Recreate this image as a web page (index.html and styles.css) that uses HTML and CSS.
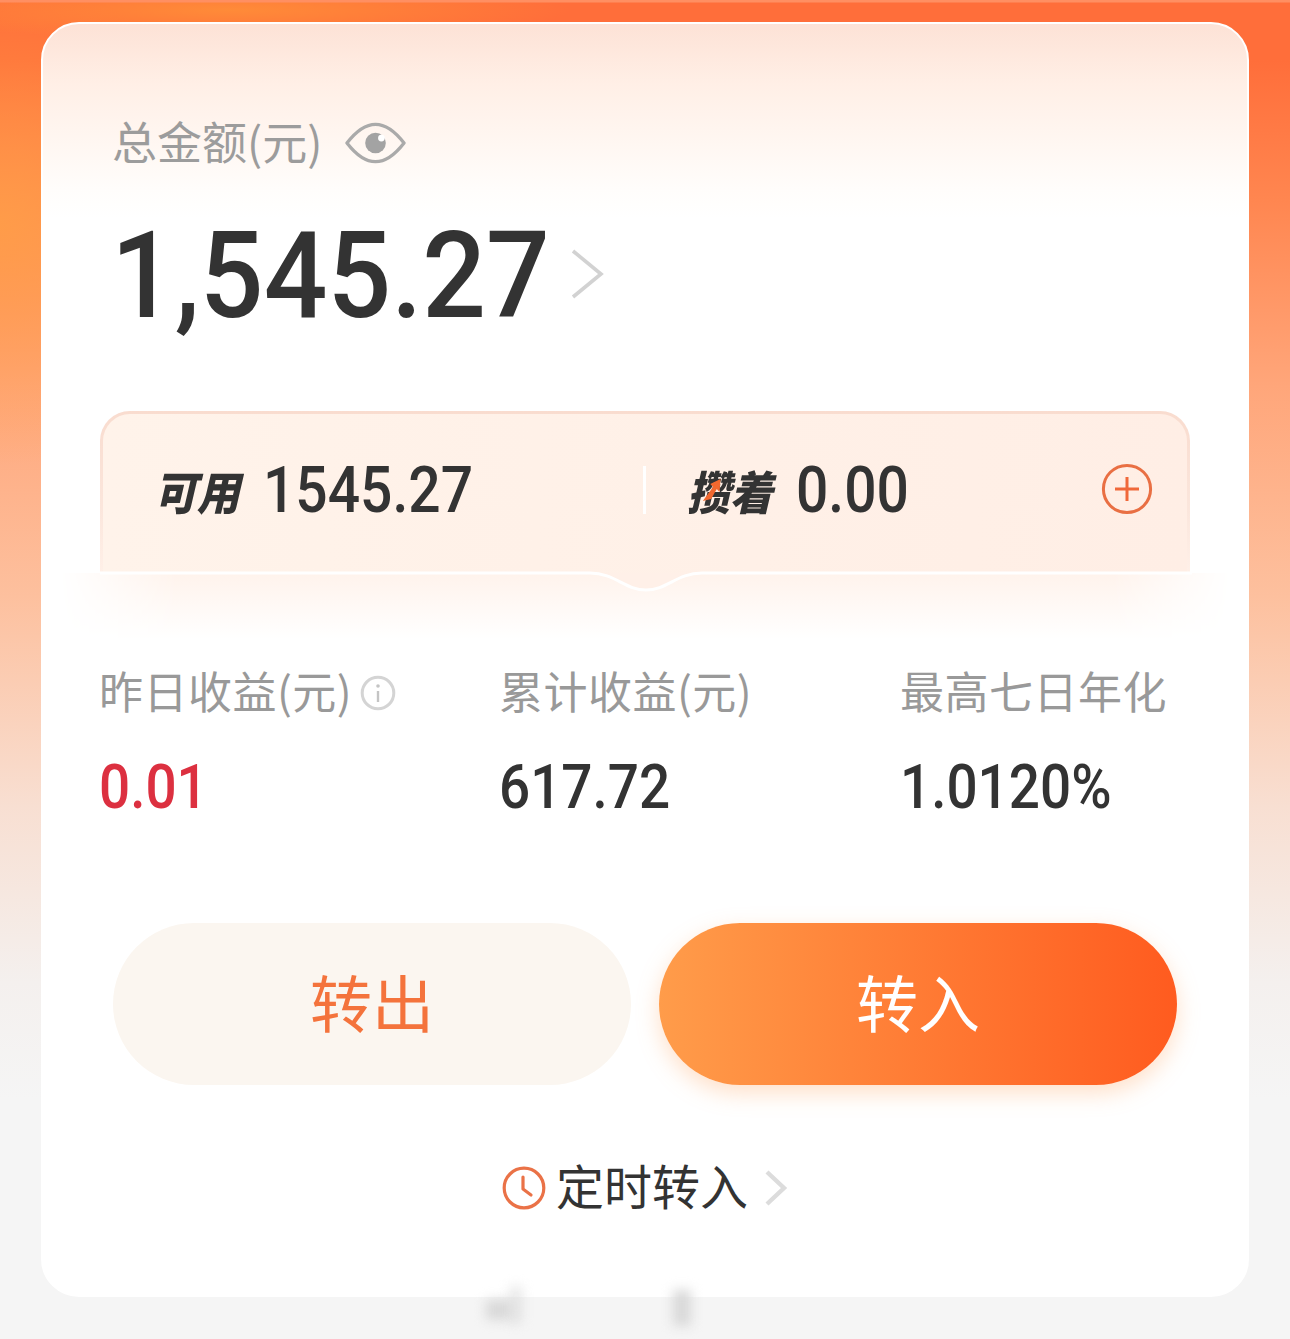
FILE: index.html
```html
<!DOCTYPE html>
<html lang="zh-CN">
<head>
    <meta charset="UTF-8">
    <meta name="viewport" content="width=device-width, initial-scale=1.0">
    <title>总金额</title>
    <link rel="stylesheet" href="styles.css">
</head>
<body>
    <div class="card">
        <div class="total-label">
            <span>总金额(元)</span>
            <svg class="eye-icon" viewBox="0 0 62 44" fill="none">
                <path d="M2 22C12 9 21 3 31 3s19 6 29 19C50 35 41 41 31 41S12 35 2 22z" stroke="#aaa" stroke-width="3.4" stroke-linejoin="round"/>
                <circle cx="31" cy="22" r="10.5" fill="#a3a3a3"/>
                <circle cx="37" cy="17" r="3.4" fill="#fff"/>
            </svg>
        </div>

        <div class="total-amount">
            <span class="amount-num">1,545.27</span>
            <svg class="big-chevron" viewBox="0 0 34 50" fill="none">
                <path d="M3 2l28 23L3 48" stroke="#d2d2d2" stroke-width="3.6"/>
            </svg>
        </div>

        <!-- 可用 / 攒着 -->
        <div class="balance-panel">
            <div class="balance-col">
                <span class="balance-tag">可用</span>
                <span class="balance-num">1545.27</span>
            </div>
            <div class="balance-line"></div>
            <div class="balance-col saved">
                <span class="balance-tag">攒着<svg class="tag-arrow" viewBox="0 0 22 26"><path d="M2 24L13 10l-3-3 11-5-1 13-3-3-6 10z" fill="#f2682f"/></svg></span>
                <span class="balance-num">0.00</span>
            </div>
            <svg class="plus-icon" viewBox="0 0 52 52" fill="none">
                <circle cx="26" cy="26" r="23.6" stroke="#e96f43" stroke-width="3"/>
                <path d="M26 14v24M14 26h24" stroke="#f0683a" stroke-width="3"/>
            </svg>
            <svg class="panel-notch" viewBox="0 0 1092 22" fill="none">
                <path d="M490 2C515 2 525 19 546 19S577 2 602 2z" fill="#fff0e8"/>
                <path d="M0 2H490C515 2 525 19 546 19S577 2 602 2H1092" stroke="#fff" stroke-width="3"/>
            </svg>
        </div>
        <div class="panel-glow"></div>

        <div class="stats">
            <div class="stat">
                <div class="stat-label">昨日收益(元)<svg class="info-icon" viewBox="0 0 36 36" fill="none">
                    <circle cx="18" cy="18" r="15.8" stroke="#d4d4d4" stroke-width="3"/>
                    <circle cx="18" cy="11" r="1.8" fill="#c4c4c4"/>
                    <path d="M18 16v11" stroke="#c4c4c4" stroke-width="2.4"/>
                </svg></div>
                <div class="stat-value red">0.01</div>
            </div>
            <div class="stat">
                <div class="stat-label">累计收益(元)</div>
                <div class="stat-value">617.72</div>
            </div>
            <div class="stat">
                <div class="stat-label">最高七日年化</div>
                <div class="stat-value">1.0120%</div>
            </div>
        </div>

        <div class="actions">
            <button class="action-btn out">转出</button>
            <button class="action-btn in">转入</button>
        </div>

        <div class="schedule">
            <svg class="clock-icon" viewBox="0 0 44 44" fill="none">
                <circle cx="22" cy="22" r="19.8" stroke="#ea7247" stroke-width="3.2"/>
                <path d="M21 11v12l8 6" stroke="#ea7247" stroke-width="3.2" stroke-linecap="round" stroke-linejoin="round"/>
            </svg>
            <span>定时转入</span>
            <svg class="small-chevron" viewBox="0 0 24 36" fill="none">
                <path d="M3 2l17 16L3 34" stroke="#dcdcdc" stroke-width="4.4"/>
            </svg>
        </div>
    </div>

    <!-- 底部水印的模糊痕迹 -->
    <div class="smudge smudge-a"></div>
    <div class="smudge smudge-b"></div>
    <div class="smudge smudge-c"></div>
</body>
</html>
```

FILE: styles.css
```css
body {
    position: relative;
    margin: 0;
    height: 1339px;
    padding: 22px 41px 0;
    box-sizing: border-box;
    overflow: hidden;
    font-family: "Noto Sans CJK SC", "Liberation Sans", sans-serif;
    background:
        linear-gradient(180deg, #ff8f62 0, #ff8f62 2px, rgba(255, 143, 98, 0) 3px),
        radial-gradient(ellipse 340px 30px at 230px 10px, rgba(255, 146, 56, 0.8), rgba(255, 146, 56, 0)),
        radial-gradient(ellipse 260px 240px at 0 225px, rgba(255, 160, 70, 0.8), rgba(255, 160, 70, 0)),
        linear-gradient(180deg, #ff6e3a 0, #ff6e3a 60px, #ff8650 200px, #ffa67a 386px, #fdc09e 596px, #f8dfd2 807px, #f4f0ee 982px, #f5f5f5 1100px);
}
.card {
    position: relative;
    box-sizing: border-box;
    width: 1208px;
    height: 1275px;
    border: 2px solid #fff;
    border-radius: 38px;
    padding: 0 57px;
    background: linear-gradient(180deg, #fde2d6 0, #ffefe6 60px, #fff7f2 120px, #fffdfb 165px, #fff 195px, #fff 100%);
}

/* 总金额 */
.total-label {
    display: flex;
    align-items: center;
    margin: 88px 0 0 12px;
    height: 58px;
    font-size: 45px;
    line-height: 58px;
    color: #9c9c9c;
}
.eye-icon {
    width: 61px;
    height: 44px;
    margin: 4px 0 0 23px;
}
.total-amount {
    display: flex;
    align-items: center;
    margin: 36px 0 0 11px;
    height: 140px;
    font-family: Roboto, "Liberation Sans", sans-serif;
    font-size: 120px;
    font-weight: 500;
    color: #333;
}
.amount-num {
    display: inline-block;
    transform: scaleX(0.935);
    transform-origin: left center;
}
.big-chevron {
    width: 34px;
    height: 50px;
    margin: 0 0 5px -10px;
}

/* 可用 / 攒着 */
.balance-panel {
    position: relative;
    z-index: 1;
    display: flex;
    align-items: flex-start;
    box-sizing: border-box;
    height: 162px;
    margin-top: 65px;
    padding-top: 40px;
    border: 3px solid transparent;
    border-bottom: 0;
    border-radius: 30px 30px 0 0;
    background:
        linear-gradient(90deg, #fff3ea, #ffeee5) padding-box,
        linear-gradient(180deg, #f9dccf 0, #fbe6dc 60%, #fff0e8 100%) border-box;
}
.balance-col {
    display: flex;
    align-items: center;
    height: 72px;
    width: 540px;
    padding-left: 51px;
    box-sizing: border-box;
}
.balance-col.saved {
    width: 380px;
    padding-left: 41px;
}
.balance-tag {
    position: relative;
    display: inline-block;
    flex: none;
    font-size: 46px;
    font-weight: 900;
    font-style: italic;
    color: #333;
    margin-right: 17px;
    transform: scaleX(0.93);
    transform-origin: left center;
}
.tag-arrow {
    position: absolute;
    left: 15px;
    top: 20px;
    width: 22px;
    height: 26px;
}
.balance-num {
    display: inline-block;
    font-family: Roboto, "Liberation Sans", sans-serif;
    font-size: 64px;
    font-weight: 500;
    color: #333;
    transform: scaleX(0.89);
    transform-origin: left center;
}
.balance-line {
    width: 3px;
    height: 48px;
    margin-top: 12px;
    background: #fff;
}
.plus-icon {
    position: absolute;
    left: 998px;
    top: 49px;
    width: 52px;
    height: 52px;
}
.panel-notch {
    position: absolute;
    left: -3px;
    bottom: -20px;
    width: 1092px;
    height: 22px;
}
.panel-glow {
    height: 66px;
    margin: 0 -40px;
    background: linear-gradient(180deg, #fff3ec, #fff);
    -webkit-mask-image: linear-gradient(90deg, transparent, #000 10%, #000 90%, transparent);
    mask-image: linear-gradient(90deg, transparent, #000 10%, #000 90%, transparent);
}

/* 收益 */
.stats {
    display: grid;
    grid-template-columns: 400px 401px 1fr;
    margin-top: 21px;
}
.stat-label {
    display: flex;
    align-items: center;
    height: 60px;
    margin-left: -1px;
    font-size: 44px;
    line-height: 60px;
    letter-spacing: 0.5px;
    color: #999;
}
.info-icon {
    width: 36px;
    height: 36px;
    margin: 6px 0 0 8px;
}
.stat-value {
    margin: 31px 0 0 -1px;
    height: 72px;
    font-family: Roboto, "Liberation Sans", sans-serif;
    font-size: 62px;
    line-height: 72px;
    font-weight: 500;
    color: #333;
    transform: scaleX(0.885);
    transform-origin: left center;
}
.stat-value.red {
    color: #dc3040;
}

/* 按钮 */
.actions {
    display: flex;
    gap: 28px;
    margin: 100px 13px 0 13px;
}
.action-btn {
    width: 518px;
    height: 162px;
    border: 0;
    border-radius: 81px;
    padding: 0 0 6px;
    font-family: inherit;
    font-size: 62px;
}
.action-btn.out {
    background: #fbf6f0;
    color: #f4733c;
}
.action-btn.in {
    background: linear-gradient(90deg, #ff9c4a, #ff5b1f);
    color: #fff;
    box-shadow: 0 8px 22px rgba(255, 165, 100, 0.35);
}

/* 定时转入 */
.schedule {
    display: flex;
    align-items: center;
    justify-content: center;
    margin-top: 67px;
    height: 64px;
    font-size: 48px;
    color: #333;
}
.clock-icon {
    width: 44px;
    height: 44px;
    margin: 8px 10px 0 0;
}
.small-chevron {
    width: 24px;
    height: 36px;
    margin: 8px 0 0 16px;
}

.smudge {
    position: absolute;
    background: #d8d8d8;
    filter: blur(6px);
}
.smudge-a {
    left: 486px;
    top: 1300px;
    width: 26px;
    height: 20px;
}
.smudge-b {
    left: 510px;
    top: 1286px;
    width: 12px;
    height: 38px;
    opacity: 0.6;
}
.smudge-c {
    left: 673px;
    top: 1290px;
    width: 18px;
    height: 36px;
}
```
